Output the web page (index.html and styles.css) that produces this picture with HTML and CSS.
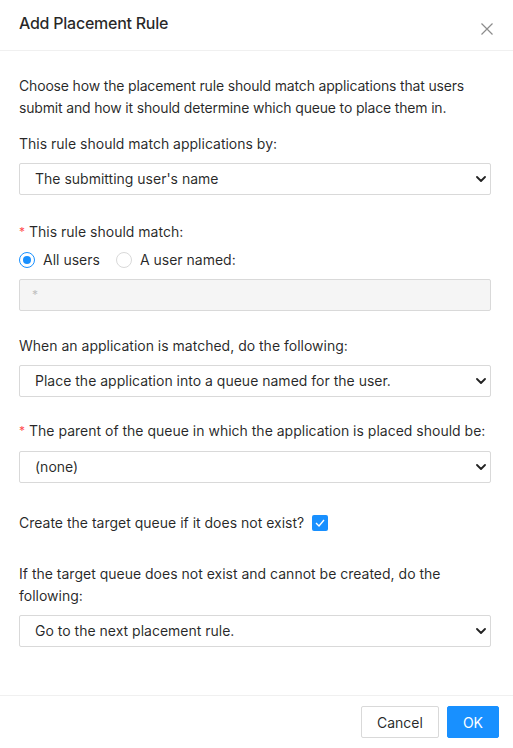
FILE: index.html
```html
<!DOCTYPE html>
<html>
<head>
<meta charset="utf-8">
<link rel="stylesheet" href="styles.css">
</head>
<body>
<div class="modal">
  <div class="modal-header">
    <div class="modal-title">Add Placement Rule</div>
    <span class="modal-close" aria-label="Close">
      <svg width="12" height="12" viewBox="0 0 12 12"><path d="M0.5 0.5 L11.5 11.5 M11.5 0.5 L0.5 11.5" stroke="#8c8c8c" stroke-width="1.2" fill="none"/></svg>
    </span>
  </div>
  <div class="modal-body">
    <p class="intro">Choose how the placement rule should match applications that users submit and how it should determine which queue to place them in.</p>

    <div class="field f-match-by">
      <div class="label">This rule should match applications by:</div>
      <div class="select"><span>The submitting user's name</span><svg class="chev" width="10" height="6" viewBox="0 0 10 6"><path d="M1 1 L5 5 L9 1" stroke="#222" stroke-width="1.8" fill="none" stroke-linecap="round" stroke-linejoin="round"/></svg></div>
    </div>

    <div class="field f-match">
      <div class="label"><span class="req">*</span>This rule should match:</div>
      <div class="radios">
        <label class="radio"><span class="radio-dot checked"></span>All users</label>
        <label class="radio"><span class="radio-dot"></span>A user named:</label>
      </div>
      <div class="input disabled">*</div>
    </div>

    <div class="field f-action">
      <div class="label">When an application is matched, do the following:</div>
      <div class="select"><span>Place the application into a queue named for the user.</span><svg class="chev" width="10" height="6" viewBox="0 0 10 6"><path d="M1 1 L5 5 L9 1" stroke="#222" stroke-width="1.8" fill="none" stroke-linecap="round" stroke-linejoin="round"/></svg></div>
    </div>

    <div class="field f-parent">
      <div class="label"><span class="req">*</span>The parent of the queue in which the application is placed should be:</div>
      <div class="select"><span>(none)</span><svg class="chev" width="10" height="6" viewBox="0 0 10 6"><path d="M1 1 L5 5 L9 1" stroke="#222" stroke-width="1.8" fill="none" stroke-linecap="round" stroke-linejoin="round"/></svg></div>
    </div>

    <div class="field f-create">
      <div class="label inline">Create the target queue if it does not exist?
        <span class="checkbox"><svg width="10" height="8" viewBox="0 0 10 8"><path d="M1 4 L4 7 L9 1" stroke="#fff" stroke-width="1.4" fill="none"/></svg></span>
      </div>
    </div>

    <div class="field f-fallback">
      <div class="label">If the target queue does not exist and cannot be created, do the following:</div>
      <div class="select"><span>Go to the next placement rule.</span><svg class="chev" width="10" height="6" viewBox="0 0 10 6"><path d="M1 1 L5 5 L9 1" stroke="#222" stroke-width="1.8" fill="none" stroke-linecap="round" stroke-linejoin="round"/></svg></div>
    </div>
  </div>
  <div class="modal-footer">
    <button class="btn">Cancel</button>
    <button class="btn primary">OK</button>
  </div>
</div>
</body>
</html>
```

FILE: styles.css
```css
* { box-sizing: border-box; }
html, body { margin: 0; padding: 0; background: #fff; }
body {
  font-family: Inter, "Noto Sans", "Liberation Sans", sans-serif;
  font-size: 14px;
  line-height: 22px;
  color: rgba(0,0,0,0.85);
  width: 513px;
  height: 748px;
  overflow: hidden;
}
.modal { display: flex; flex-direction: column; height: 748px; }
.modal-header {
  display: flex;
  justify-content: space-between;
  align-items: flex-start;
  height: 51px;
  padding: 12px 20px 0 19px;
  border-bottom: 1px solid #f0f0f0;
}
.modal-title { font-size: 16px; font-weight: 500; line-height: 22px; letter-spacing: -0.25px; }
.modal-close { display: flex; margin-top: 11px; }
.modal-body { flex: 1; padding: 24px 22px 0 19px; }
.intro { margin: 0 0 14px; letter-spacing: -0.17px; }
.label { margin-bottom: 8px; }
.label.inline { display: flex; align-items: center; margin-bottom: 0; }
.req { color: #ff4d4f; font-size: 12px; margin-right: 4px; position: relative; top: -1px; }
.select {
  height: 32px;
  border: 1px solid #d9d9d9;
  border-radius: 2px;
  display: flex;
  align-items: center;
  justify-content: space-between;
  padding: 0 4px 0 15px;
  color: rgba(0,0,0,0.85);
}
.f-match { margin-top: 26px; }
.radios { display: flex; gap: 16px; margin-top: -3px; margin-bottom: 8px; }
.radio { display: flex; align-items: center; gap: 8px; }
.radio-dot {
  width: 16px; height: 16px; border-radius: 50%;
  border: 1px solid #d9d9d9; background: #fff;
  display: inline-flex; align-items: center; justify-content: center;
}
.radio-dot.checked { border-color: #1890ff; }
.radio-dot.checked::after {
  content: ""; width: 8px; height: 8px; border-radius: 50%; background: #1890ff;
}
.input {
  height: 32px;
  border: 1px solid #d9d9d9;
  border-radius: 2px;
  padding: 4px 12px;
  line-height: 22px;
}
.input.disabled { background: #f5f5f5; color: #bfbfbf; font-size: 12px; }
.f-action { margin-top: 24px; }
.f-parent { margin-top: 23px; }
.f-create { margin-top: 29px; }
.checkbox {
  width: 16px; height: 16px; margin-left: 8px;
  background: #1890ff; border-radius: 2px;
  display: inline-flex; align-items: center; justify-content: center;
}
.f-fallback { margin-top: 29px; }
.modal-footer {
  display: flex;
  justify-content: flex-end;
  gap: 8px;
  padding: 10px 14px 10px 0;
  border-top: 1px solid #f0f0f0;
}
.btn {
  font-family: inherit;
  font-size: 14px;
  height: 32px;
  padding: 4px 15px;
  border-radius: 2px;
  border: 1px solid #d9d9d9;
  background: #fff;
  color: rgba(0,0,0,0.85);
}
.btn.primary { background: #1890ff; border-color: #1890ff; color: #fff; }
```
